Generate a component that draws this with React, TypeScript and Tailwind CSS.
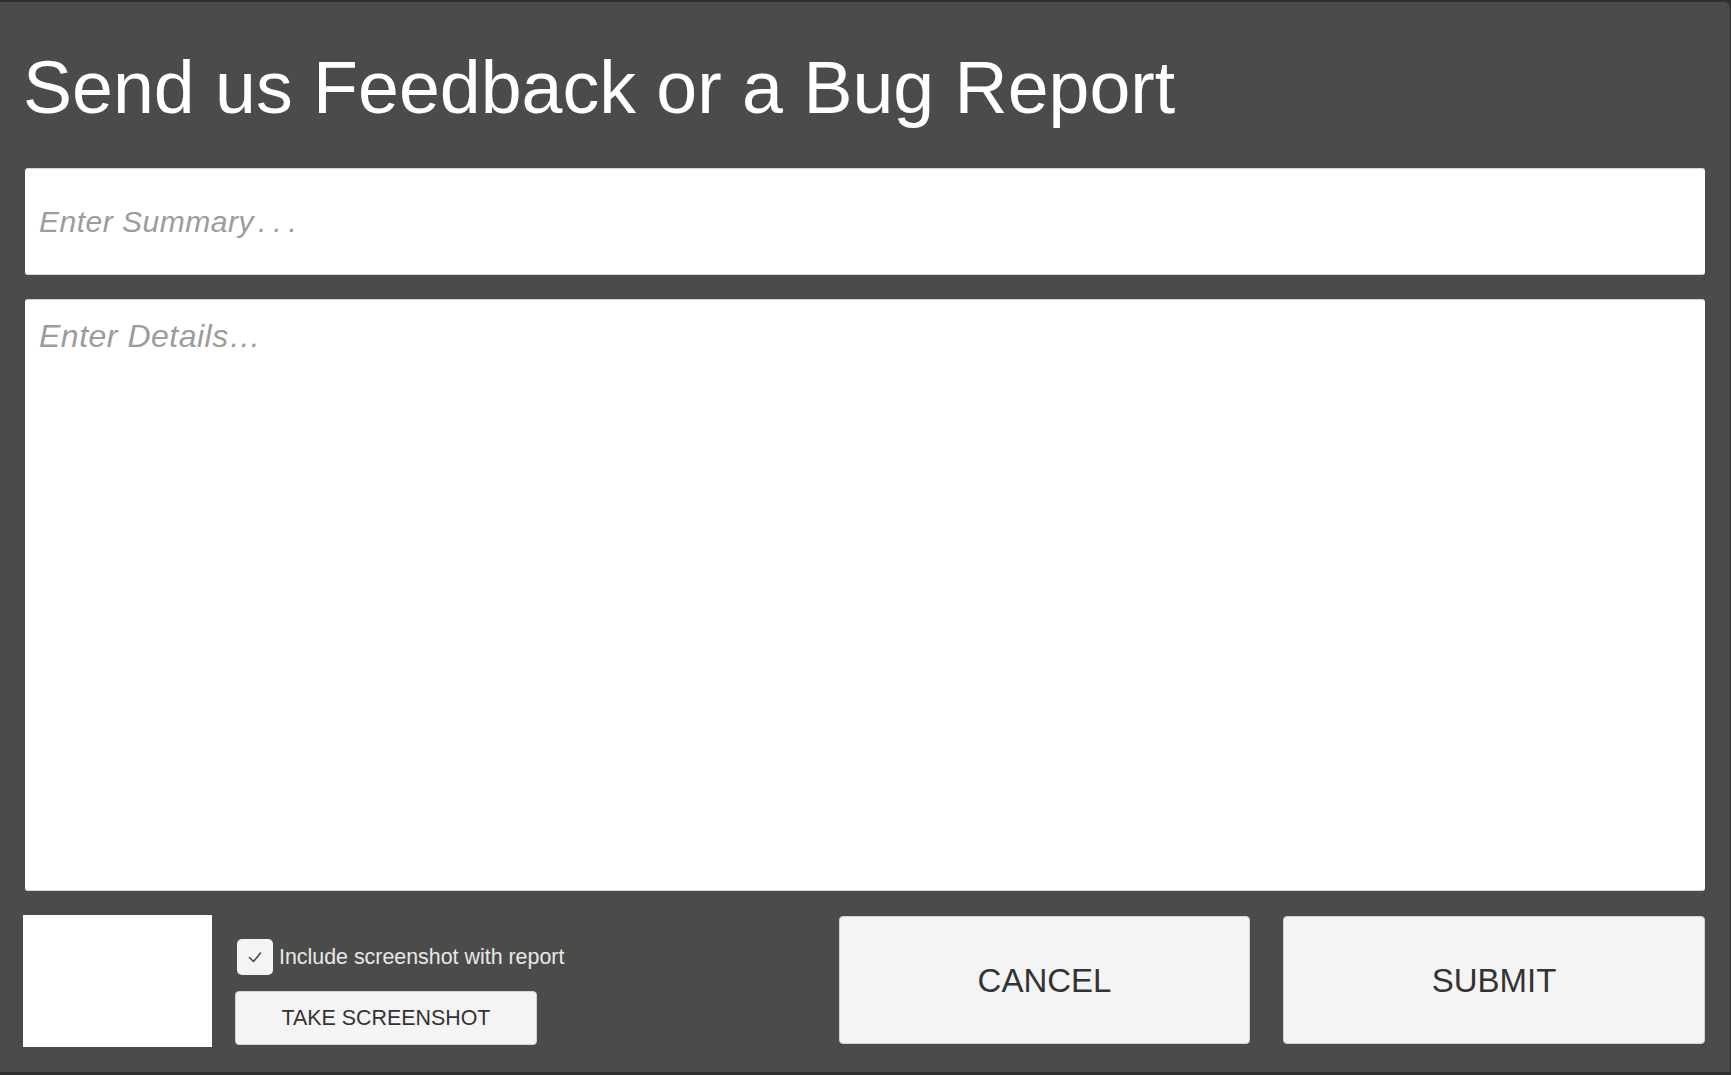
import React from "react";

export default function App() {
  return (
    <div className="w-[1731px] h-[1075px] bg-[#2f302f] font-['Liberation_Sans',Arial,sans-serif] overflow-hidden">
      <div className="mt-[2px] h-[1070px] w-[1730px] bg-[#4b4c4a] rounded-tr-[6px] px-[25px] flex flex-col">
        <h1 className="pt-[49px] -ml-[2px] text-[73.5px] leading-none text-white font-normal whitespace-nowrap">
          Send us Feedback or a Bug Report
        </h1>

        <div className="mt-[43.5px] h-[107px] w-full shrink-0 bg-white rounded-[3px] border-y border-[#d2d2d2] pl-[14px] flex items-center text-[30px] leading-none italic text-[#9c9c9c] whitespace-nowrap">
          <span className="tracking-[0.5px]">Enter Summary</span>
          <span className="ml-[4px] tracking-[7px]">...</span>
        </div>

        <div className="mt-[24px] h-[592px] w-full shrink-0 bg-white rounded-[3px] border-y border-[#d2d2d2] pl-[14px] pt-[20px] text-[32px] leading-none italic tracking-[0.5px] text-[#9c9c9c] whitespace-nowrap">
          Enter Details…
        </div>

        <div className="mt-[24px] flex items-start">
          <div className="-ml-[2px] w-[189px] h-[132px] bg-white shrink-0" />

          <div className="ml-[23px] flex flex-col shrink-0">
            <div className="mt-[24px] ml-[2px] flex items-center">
              <div className="w-[36px] h-[36px] rounded-[5px] bg-[#f4f4f4] flex items-center justify-center">
                <svg width="36" height="36" viewBox="0 0 36 36" fill="none">
                  <polyline
                    points="12.5,18.5 16.5,22.5 23.5,14"
                    stroke="#4a4a4a"
                    strokeWidth="1.6"
                    strokeLinecap="round"
                    strokeLinejoin="round"
                  />
                </svg>
              </div>
              <span className="ml-[6px] mt-[2px] text-[21.4px] leading-none text-[#e8e8e8] whitespace-nowrap">
                Include screenshot with report
              </span>
            </div>
            <button className="mt-[16px] w-[302px] h-[54px] rounded-[4px] bg-[#f4f4f4] border border-[#d4d4d4] pt-[2px] text-[21.4px] leading-none text-[#333] flex items-center justify-center">
              TAKE SCREENSHOT
            </button>
          </div>

          <div className="flex-1" />

          <button className="mt-[1px] w-[411px] h-[128px] shrink-0 rounded-[4px] bg-[#f4f4f4] border border-[#d4d4d4] text-[33px] leading-none text-[#333] flex items-center justify-center">
            CANCEL
          </button>
          <button className="ml-[33px] mt-[1px] w-[422px] h-[128px] shrink-0 rounded-[4px] bg-[#f4f4f4] border border-[#d4d4d4] text-[33px] leading-none text-[#333] flex items-center justify-center">
            SUBMIT
          </button>
        </div>
      </div>
    </div>
  );
}
